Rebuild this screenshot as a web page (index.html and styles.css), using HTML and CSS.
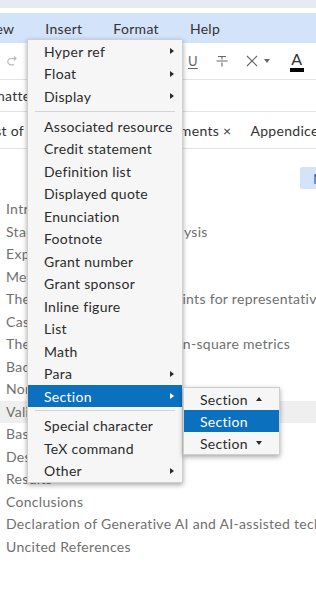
FILE: index.html
```html
<!DOCTYPE html>
<html lang="en">
<head>
  <meta charset="UTF-8">
  <meta name="viewport" content="width=device-width, initial-scale=1.0">
  <title>Editor</title>
  <link rel="stylesheet" href="styles.css">
</head>
<body>
  <div class="app">
    <div class="chrome"></div>

    <nav class="menubar">
      <span class="menubar-item first">View</span>
      <span class="menubar-item">Insert</span>
      <span class="menubar-item">Format</span>
      <span class="menubar-item">Help</span>
    </nav>

    <div class="toolbar">
      <svg class="tool redo" width="12" height="12" viewBox="0 0 12 12">
        <path d="M10 3.5H5a3.2 3.2 0 0 0 0 6.4h3" fill="none" stroke="#b5b5b5" stroke-width="1.1"/>
        <path d="M8 1.5l2 2-2 2" fill="none" stroke="#b5b5b5" stroke-width="1.1"/>
      </svg>
      <div class="tool-group">
        <span class="tool underline">U</span>
        <svg class="tool" width="12" height="14" viewBox="0 0 12 14">
          <path d="M2 2.5h8M6 2.5v3M6 8.5v4M0.5 7h11" fill="none" stroke="#666" stroke-width="1.1"/>
        </svg>
        <span class="tool clear">
          <svg width="12" height="12" viewBox="0 0 12 12">
            <path d="M1 1l10 10M11 1L1 11" fill="none" stroke="#666" stroke-width="1.1"/>
          </svg>
          <span class="caret"></span>
        </span>
        <span class="tool color">
          <span class="color-letter">A</span>
          <span class="color-bar"></span>
        </span>
      </div>
    </div>

    <div class="format-row">
      <span class="format-label">Formatted</span>
    </div>

    <div class="tabs">
      <span class="tab first">List of items ×</span>
      <span class="tab">Acknowledgements ×</span>
      <span class="tab">Appendices</span>
    </div>

    <div class="actions">
      <button class="new-btn">New</button>
    </div>

    <ul class="outline">
      <li>Introduction</li>
      <li>Stability and sensitivity analysis</li>
      <li>Experimental setup</li>
      <li>Methods</li>
      <li>Theoretical packing constraints for representative volumes</li>
      <li>Case study</li>
      <li>The local and grid root-mean-square metrics</li>
      <li>Background</li>
      <li>Normalization</li>
      <li class="active">Validation</li>
      <li>Baseline</li>
      <li>Design</li>
      <li>Results</li>
      <li>Conclusions</li>
      <li>Declaration of Generative AI and AI-assisted technologies in the writing process</li>
      <li>Uncited References</li>
    </ul>
  </div>

  <div class="menu">
    <div class="menu-item">Hyper ref<span class="arrow"></span></div>
    <div class="menu-item">Float<span class="arrow"></span></div>
    <div class="menu-item">Display<span class="arrow"></span></div>
    <div class="menu-sep"></div>
    <div class="menu-item">Associated resource</div>
    <div class="menu-item">Credit statement</div>
    <div class="menu-item">Definition list</div>
    <div class="menu-item">Displayed quote</div>
    <div class="menu-item">Enunciation</div>
    <div class="menu-item">Footnote</div>
    <div class="menu-item">Grant number</div>
    <div class="menu-item">Grant sponsor</div>
    <div class="menu-item">Inline figure</div>
    <div class="menu-item">List</div>
    <div class="menu-item">Math</div>
    <div class="menu-item">Para<span class="arrow"></span></div>
    <div class="menu-item selected">Section<span class="arrow"></span></div>
    <div class="menu-sep"></div>
    <div class="menu-item">Special character</div>
    <div class="menu-item">TeX command</div>
    <div class="menu-item">Other<span class="arrow"></span></div>
  </div>

  <div class="submenu">
    <div class="submenu-item">Section<span class="tri up"></span></div>
    <div class="submenu-item selected">Section</div>
    <div class="submenu-item">Section<span class="tri down"></span></div>
  </div>
</body>
</html>
```

FILE: styles.css
```css
* {
  box-sizing: border-box;
}

body {
  margin: 0;
  width: 316px;
  height: 598px;
  overflow: hidden;
  background-color: #fff;
  font-family: Lato, "Liberation Sans", sans-serif;
  font-size: 14px;
  letter-spacing: 0.3px;
  color: #333;
}

.app {
  width: 316px;
  overflow: hidden;
}

.chrome {
  height: 13px;
  background-color: #fff;
  border-top: 8px solid #e8eaf1;
}

.menubar {
  display: flex;
  gap: 31px;
  height: 30px;
  align-items: center;
  background-color: #d3e3fa;
  white-space: nowrap;
}

.menubar-item.first {
  margin-left: -18px;
}

.toolbar {
  display: flex;
  align-items: center;
  height: 37px;
  border-bottom: 1px solid #e3e3e3;
  white-space: nowrap;
}

.redo {
  margin-left: 6px;
}

.tool-group {
  display: flex;
  align-items: center;
  gap: 18px;
  margin-left: 170px;
}

.tool {
  color: #666;
}

.underline {
  text-decoration: underline;
  text-underline-offset: 2px;
  font-size: 13px;
}

.clear {
  display: flex;
  align-items: center;
  gap: 6px;
}

.caret {
  width: 0;
  height: 0;
  border-left: 3.5px solid transparent;
  border-right: 3.5px solid transparent;
  border-top: 4px solid #666;
}

.color {
  display: flex;
  flex-direction: column;
  align-items: center;
  margin-left: 2px;
  color: #333;
}

.color-letter {
  font-size: 16px;
  line-height: 16px;
}

.color-bar {
  width: 14px;
  height: 4px;
  background-color: #000;
  margin-top: 1px;
}

.format-row {
  height: 32px;
  display: flex;
  align-items: center;
  border-bottom: 1px solid #e3e3e3;
  white-space: nowrap;
}

.format-label {
  margin-left: -28px;
}

.tabs {
  display: flex;
  gap: 19px;
  height: 37px;
  align-items: center;
  border-bottom: 1px solid #e3e3e3;
  white-space: nowrap;
}

.tab.first {
  margin-left: -16px;
}

.actions {
  height: 49px;
  display: flex;
  justify-content: flex-end;
  align-items: flex-start;
  padding-top: 18px;
}

.new-btn {
  height: 22px;
  width: 16px;
  padding: 0 0 0 13px;
  border: none;
  border-radius: 2px 0 0 2px;
  background-color: #d3e3fa;
  color: #1c68c9;
  font: inherit;
  text-align: left;
  overflow: hidden;
  white-space: nowrap;
}

.outline {
  list-style: none;
  margin: 0;
  padding: 0;
  color: #707070;
}

.outline li {
  height: 22.5px;
  line-height: 22.5px;
  padding-left: 6px;
  white-space: nowrap;
  overflow: hidden;
}

.outline li.active {
  background-color: #efefef;
}

.menu {
  position: absolute;
  left: 27px;
  top: 39px;
  width: 156px;
  background-color: #f6f6f6;
  border: 1px solid #cfcfcf;
  box-shadow: 0 2px 5px rgba(0, 0, 0, 0.35);
  color: #2b2b2b;
}

.menu-item {
  display: flex;
  align-items: center;
  justify-content: space-between;
  height: 22.5px;
  padding: 0 8px 0 16px;
  white-space: nowrap;
}

.menu-item.selected {
  background-color: #0b70be;
  color: #fff;
}

.arrow {
  width: 0;
  height: 0;
  border-top: 3.5px solid transparent;
  border-bottom: 3.5px solid transparent;
  border-left: 4px solid #2b2b2b;
}

.menu-item.selected .arrow {
  border-left-color: #fff;
}

.menu-sep {
  height: 1px;
  margin: 3px 7px 3.25px 7px;
  background-color: #d4d4d4;
}

.submenu {
  position: absolute;
  left: 183px;
  top: 387px;
  width: 97px;
  background-color: #f6f6f6;
  border: 1px solid #cfcfcf;
  box-shadow: 0 2px 5px rgba(0, 0, 0, 0.35);
  color: #2b2b2b;
}

.submenu-item {
  display: flex;
  align-items: center;
  gap: 8px;
  height: 22px;
  padding-left: 16px;
  white-space: nowrap;
}

.submenu-item.selected {
  background-color: #0b70be;
  color: #fff;
}

.tri {
  width: 0;
  height: 0;
  border-left: 3.5px solid transparent;
  border-right: 3.5px solid transparent;
}

.tri.up {
  border-bottom: 4px solid #2b2b2b;
}

.tri.down {
  border-top: 4px solid #2b2b2b;
}
```
